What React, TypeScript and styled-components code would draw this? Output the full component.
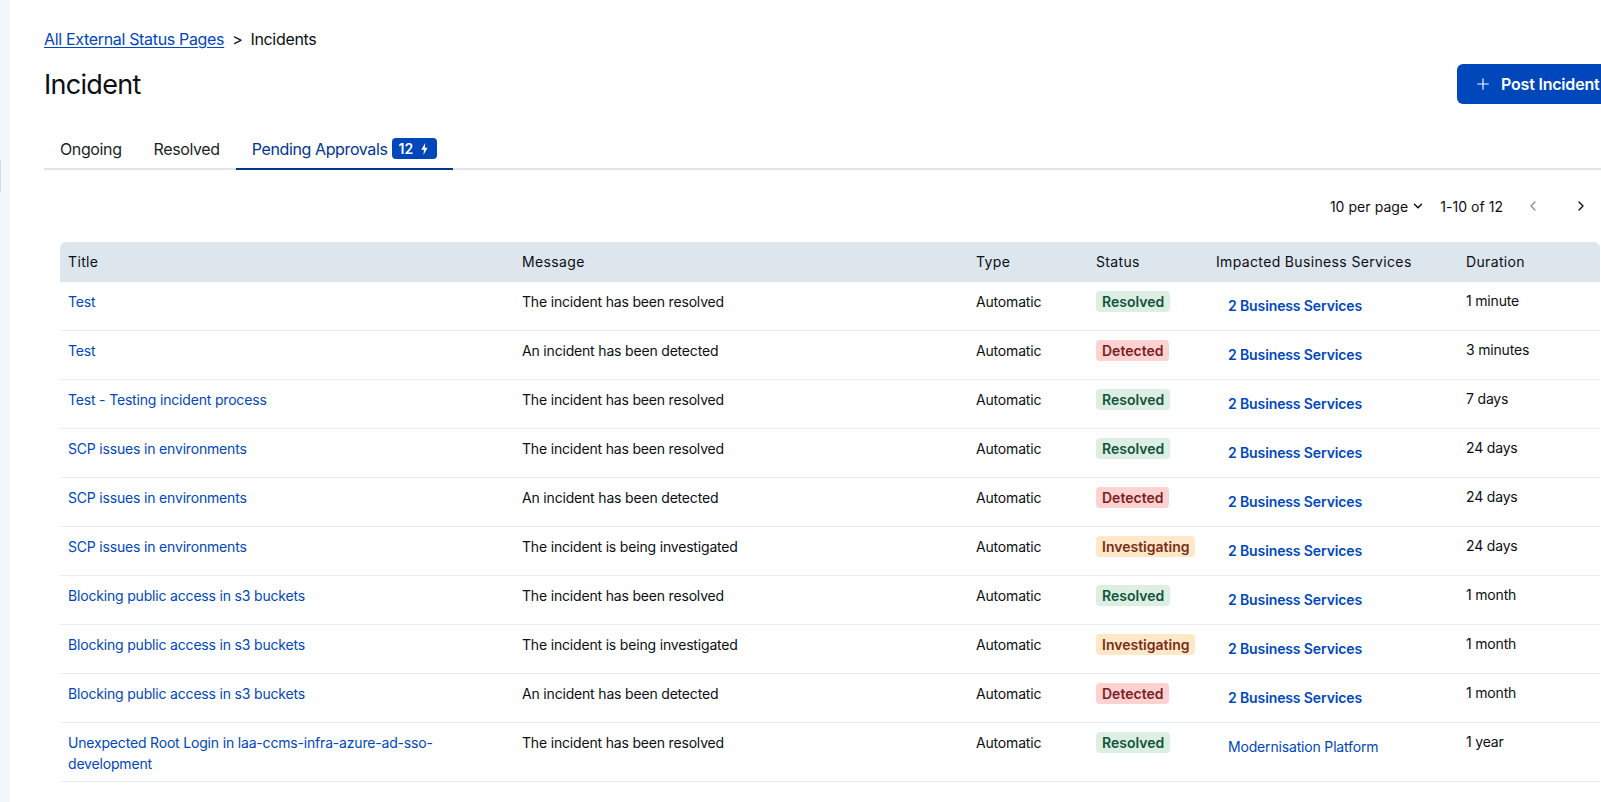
import React from 'react'
import styled, { createGlobalStyle } from 'styled-components'
import { ChevronDown, ChevronLeft, ChevronRight, Plus } from 'lucide-react'

const GlobalStyle = createGlobalStyle`
    html, body {
        margin: 0;
        padding: 0;
        height: 100%;
        overflow: hidden;
        background: #fff;
        font-family: Inter, "Liberation Sans", sans-serif;
        color: #0b0f14;
    }
`

const Page = styled.div`
    display: flex;
    width: 1601px;
    height: 802px;
    overflow: hidden;
`

const SideStrip = styled.div`
    position: relative;
    flex: 0 0 10px;
    background: #f4f8fc;
`

const SideHandle = styled.div`
    position: absolute;
    left: 0;
    top: 160px;
    width: 1px;
    height: 32px;
    background: #d5dce4;
`

const Main = styled.main`
    flex: 1;
    min-width: 0;
    padding: 28px 0 0 34px;
`

const Breadcrumb = styled.nav`
    display: flex;
    align-items: center;
    height: 22px;
    font-size: 16px;
    line-height: 22px;
    letter-spacing: -0.33px;
`

const CrumbLink = styled.a`
    color: #0047bb;
    text-decoration: underline;
    text-underline-offset: 2px;
`

const CrumbSeparator = styled.span`
    margin: 0 8px 0 8px;
`

const HeaderRow = styled.div`
    display: flex;
    align-items: center;
    justify-content: space-between;
    height: 40px;
    margin-top: 14px;
`

const Heading = styled.h1`
    margin: 2px 0 0;
    font-size: 27px;
    font-weight: 400;
    line-height: 40px;
    letter-spacing: -0.7px;
`

const PrimaryButton = styled.button`
    display: flex;
    flex-shrink: 0;
    align-items: center;
    gap: 9px;
    width: 170px;
    height: 40px;
    margin-right: -26px;
    padding: 0 0 0 17px;
    border: 0;
    border-radius: 6px;
    background: #0047bb;
    color: #fff;
    font-family: inherit;
    font-size: 16px;
    font-weight: 600;
    letter-spacing: -0.2px;
    white-space: nowrap;
`

const Tabs = styled.div`
    display: flex;
    height: 39px;
    margin-top: 25px;
    border-bottom: 2px solid #dde5ed;
`

const Tab = styled.div<{ $active?: boolean }>`
    display: flex;
    align-items: center;
    height: 41px;
    padding: 0 16px;
    box-sizing: border-box;
    border-bottom: 2px solid ${props => (props.$active ? '#003594' : 'transparent')};
    color: ${props => (props.$active ? '#003594' : '#1a1f26')};
    font-size: 16px;
    letter-spacing: -0.38px;
`

const TabBadge = styled.span`
    display: inline-flex;
    align-items: center;
    gap: 8px;
    height: 21px;
    margin-left: 4px;
    padding: 0 9px 0 7px;
    border-radius: 4px;
    background: #0047bb;
    color: #fff;
    font-size: 14px;
    font-weight: 600;
    letter-spacing: 0;
`

const Pagination = styled.div`
    display: flex;
    align-items: center;
    height: 22px;
    margin-top: 25px;
    font-size: 14px;
    letter-spacing: 0.05px;
`

const PerPage = styled.span`
    display: flex;
    align-items: center;
    gap: 3px;
    margin-left: auto;
`

const PageRange = styled.span`
    margin-left: 15px;
`

const PageButton = styled.span<{ $disabled?: boolean }>`
    display: flex;
    margin-left: ${props => (props.$disabled ? '22px' : '32px')};
    margin-right: ${props => (props.$disabled ? '0' : '12px')};
    color: ${props => (props.$disabled ? '#8a939d' : '#0b0f14')};
`

const TableWrap = styled.div`
    width: 1540px;
    margin: 25px 0 0 16px;
`

const Table = styled.table`
    width: 1540px;
    table-layout: fixed;
    border-collapse: separate;
    border-spacing: 0;
    font-size: 14px;
    line-height: 21px;
    letter-spacing: -0.18px;
`

const HeadCell = styled.th<{ $width: number }>`
    width: ${props => props.$width}px;
    height: 40px;
    padding: 0 8px 2px;
    box-sizing: border-box;
    background: #dde5ed;
    font-weight: 400;
    letter-spacing: 0.35px;
    text-align: left;

    &:first-child {
        border-top-left-radius: 6px;
    }

    &:last-child {
        border-top-right-radius: 6px;
    }
`

const Cell = styled.td<{ $raised?: boolean }>`
    height: 49px;
    padding: ${props => (props.$raised ? '8px' : '9px')} 8px 7px;
    box-sizing: border-box;
    border-bottom: 1px solid #e8edf3;
    vertical-align: top;
`

const TitleLink = styled.a`
    color: #0047bb;
`

const Pill = styled.span<{ $kind: Status }>`
    display: inline-block;
    height: 21px;
    padding: 0 6px;
    border-radius: 4px;
    font-weight: 600;
    line-height: 22px;
    letter-spacing: 0;
    background: ${props => pillColors[props.$kind].background};
    color: ${props => pillColors[props.$kind].color};
`

const ServiceLink = styled.a<{ $bold: boolean }>`
    display: block;
    padding: 4px 0 0 12px;
    color: #0047bb;
    font-weight: ${props => (props.$bold ? 600 : 400)};
    letter-spacing: ${props => (props.$bold ? '-0.12px' : '-0.17px')};
`

type Status = 'Resolved' | 'Detected' | 'Investigating'

const pillColors: Record<Status, { background: string; color: string }> = {
    Resolved: { background: '#dcefe2', color: '#14533a' },
    Detected: { background: '#ffd2d2', color: '#7a1f1f' },
    Investigating: { background: '#ffe8c7', color: '#7a2e1a' },
}

const columns = [
    { label: 'Title', width: 454 },
    { label: 'Message', width: 454 },
    { label: 'Type', width: 120 },
    { label: 'Status', width: 120 },
    { label: 'Impacted Business Services', width: 250 },
    { label: 'Duration', width: 142 },
]

const resolvedMessage = 'The incident has been resolved'
const detectedMessage = 'An incident has been detected'
const investigatingMessage = 'The incident is being investigated'

const rows: { title: string; message: string; status: Status; service: string; duration: string }[] = [
    { title: 'Test', message: resolvedMessage, status: 'Resolved', service: '2 Business Services', duration: '1 minute' },
    { title: 'Test', message: detectedMessage, status: 'Detected', service: '2 Business Services', duration: '3 minutes' },
    { title: 'Test - Testing incident process', message: resolvedMessage, status: 'Resolved', service: '2 Business Services', duration: '7 days' },
    { title: 'SCP issues in environments', message: resolvedMessage, status: 'Resolved', service: '2 Business Services', duration: '24 days' },
    { title: 'SCP issues in environments', message: detectedMessage, status: 'Detected', service: '2 Business Services', duration: '24 days' },
    { title: 'SCP issues in environments', message: investigatingMessage, status: 'Investigating', service: '2 Business Services', duration: '24 days' },
    { title: 'Blocking public access in s3 buckets', message: resolvedMessage, status: 'Resolved', service: '2 Business Services', duration: '1 month' },
    { title: 'Blocking public access in s3 buckets', message: investigatingMessage, status: 'Investigating', service: '2 Business Services', duration: '1 month' },
    { title: 'Blocking public access in s3 buckets', message: detectedMessage, status: 'Detected', service: '2 Business Services', duration: '1 month' },
    { title: 'Unexpected Root Login in laa-ccms-infra-azure-ad-sso-development', message: resolvedMessage, status: 'Resolved', service: 'Modernisation Platform', duration: '1 year' },
]

const BoltIcon: React.FC = () => (
    <svg width="7" height="12" viewBox="0 0 7 12" fill="#fff">
        <polygon points="4.2,0 0.3,6.8 3,6.8 2.4,12 6.7,4.8 3.9,4.8" />
    </svg>
)

const App: React.FC = () => (
    <Page>
        <GlobalStyle />
        <SideStrip>
            <SideHandle />
        </SideStrip>
        <Main>
            <Breadcrumb>
                <CrumbLink href="#">{'All External Status Pages'}</CrumbLink>
                <CrumbSeparator>{'>'}</CrumbSeparator>
                <span>{'Incidents'}</span>
            </Breadcrumb>
            <HeaderRow>
                <Heading>{'Incident'}</Heading>
                <PrimaryButton>
                    <Plus size={18} strokeWidth={1.5} />
                    {'Post Incident'}
                </PrimaryButton>
            </HeaderRow>
            <Tabs>
                <Tab>{'Ongoing'}</Tab>
                <Tab>{'Resolved'}</Tab>
                <Tab $active>
                    {'Pending Approvals'}
                    <TabBadge>
                        {'12'}
                        <BoltIcon />
                    </TabBadge>
                </Tab>
            </Tabs>
            <Pagination>
                <PerPage>
                    {'10 per page'}
                    <ChevronDown size={14} strokeWidth={2.5} />
                </PerPage>
                <PageRange>{'1-10 of 12'}</PageRange>
                <PageButton $disabled>
                    <ChevronLeft size={16} strokeWidth={2} />
                </PageButton>
                <PageButton>
                    <ChevronRight size={16} strokeWidth={2} />
                </PageButton>
            </Pagination>
            <TableWrap>
                <Table>
                    <thead>
                        <tr>
                            {columns.map(column => (
                                <HeadCell key={column.label} $width={column.width}>
                                    {column.label}
                                </HeadCell>
                            ))}
                        </tr>
                    </thead>
                    <tbody>
                        {rows.map((row, i) => (
                            <tr key={i}>
                                <Cell>
                                    <TitleLink>{row.title}</TitleLink>
                                </Cell>
                                <Cell>{row.message}</Cell>
                                <Cell>{'Automatic'}</Cell>
                                <Cell>
                                    <Pill $kind={row.status}>{row.status}</Pill>
                                </Cell>
                                <Cell>
                                    <ServiceLink $bold={row.service.startsWith('2')}>{row.service}</ServiceLink>
                                </Cell>
                                <Cell $raised>{row.duration}</Cell>
                            </tr>
                        ))}
                    </tbody>
                </Table>
            </TableWrap>
        </Main>
    </Page>
)

export default App
